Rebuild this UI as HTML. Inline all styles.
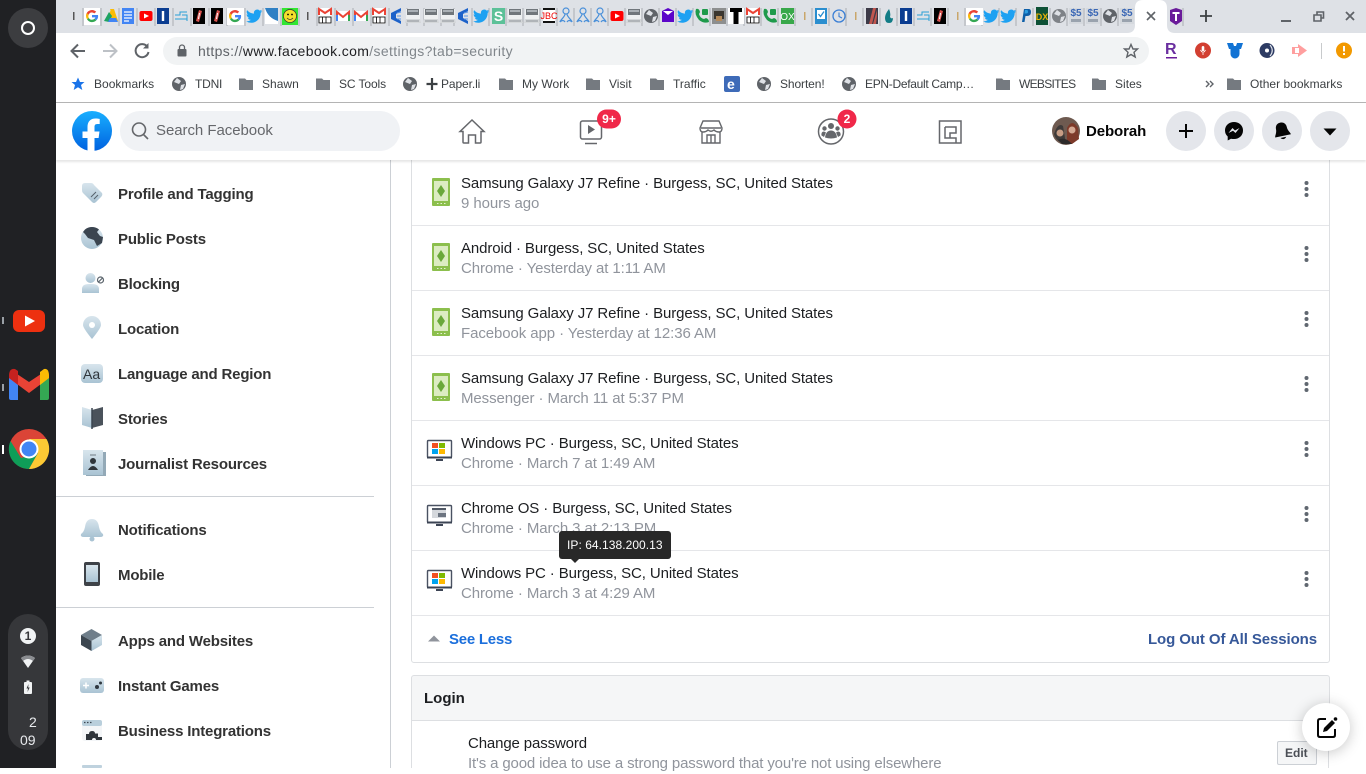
<!DOCTYPE html>
<html><head><meta charset="utf-8"><title>Security and Login</title>
<style>
html,body{margin:0;padding:0;width:1366px;height:768px;overflow:hidden;background:#fff;font-family:"Liberation Sans",sans-serif}
.b,.t{position:absolute}
.t{white-space:nowrap;line-height:20px}
.bm{font-size:12px;color:#3c4043;top:74px;letter-spacing:.02px}
.s{font-size:15px;font-weight:bold;color:#333;left:118px;letter-spacing:-.18px}
.r1{font-size:15px;color:#1c1e21;left:461px;letter-spacing:-.11px}
.r2{font-size:15px;color:#90949c;left:461px;letter-spacing:-.09px}
svg{position:absolute;left:0;top:0}
</style></head><body>
<div class="b" style="left:0;top:0;width:56px;height:768px;background:#202124"></div>
<div class="b" style="left:56px;top:0;width:1310px;height:33px;background:#dee1e6"></div>
<div class="b" style="left:163px;top:37px;width:986px;height:28px;border-radius:14px;background:#f1f3f4"></div>
<div class="b" style="left:56px;top:102px;width:1310px;height:1px;background:#b4b4b4"></div>
<div class="b" style="left:390px;top:160px;width:1px;height:608px;background:#ccd0d5"></div>
<div class="b" style="left:56px;top:496px;width:318px;height:1px;background:#ccd0d5"></div>
<div class="b" style="left:56px;top:607px;width:318px;height:1px;background:#ccd0d5"></div>
<div class="b" style="left:411px;top:150px;width:917px;height:511px;border:1px solid #dddfe2;border-radius:0 0 3px 3px;box-sizing:content-box"></div>
<div class="b" style="left:412px;top:225px;width:917px;height:1px;background:#e5e6e9"></div>
<div class="b" style="left:412px;top:290px;width:917px;height:1px;background:#e5e6e9"></div>
<div class="b" style="left:412px;top:355px;width:917px;height:1px;background:#e5e6e9"></div>
<div class="b" style="left:412px;top:420px;width:917px;height:1px;background:#e5e6e9"></div>
<div class="b" style="left:412px;top:485px;width:917px;height:1px;background:#e5e6e9"></div>
<div class="b" style="left:412px;top:550px;width:917px;height:1px;background:#e5e6e9"></div>
<div class="b" style="left:412px;top:615px;width:917px;height:1px;background:#e5e6e9"></div>
<div class="b" style="left:411px;top:675px;width:917px;height:44px;background:#f5f6f7;border:1px solid #dddfe2;border-radius:3px 3px 0 0"></div>
<div class="b" style="left:411px;top:720px;width:1px;height:48px;background:#dddfe2"></div>
<div class="b" style="left:1328px;top:720px;width:1px;height:48px;background:#dddfe2"></div>
<div class="b" style="left:56px;top:103px;width:1310px;height:57px;background:#fff;box-shadow:0 2px 2px rgba(0,0,0,.1)"></div>
<div class="b" style="left:120px;top:111px;width:280px;height:40px;border-radius:20px;background:#f0f2f5"></div>
<div class="b" style="left:1277px;top:741px;width:38px;height:22px;background:#f5f6f7;border:1px solid #ccd0d5;border-radius:2px"></div>

<svg width="1366" height="768" viewBox="0 0 1366 768" xmlns="http://www.w3.org/2000/svg">
<defs>
<linearGradient id="sb" x1="0" y1="0" x2="0" y2="1"><stop offset="0" stop-color="#d8e5ed"/><stop offset="1" stop-color="#a9c3d3"/></linearGradient>
<linearGradient id="fb" x1="0" y1="0" x2="0" y2="1"><stop offset="0" stop-color="#19afff"/><stop offset="1" stop-color="#0062e0"/></linearGradient>
<g id="G"><path d="M-6 0A6 6 0 0 1 4.2 -4.2L2.4 -2.6A3.6 3.6 0 0 0 -3.4 -1.2Z" fill="#ea4335"/><path d="M-6 0A6 6 0 0 0 -5 3.3L-3.2 2A3.6 3.6 0 0 1 -3.4 -1.2L-5.2 -3Z" fill="#fbbc05"/><path d="M-5 3.3A6 6 0 0 0 4.4 4.3L2.6 2.6A3.6 3.6 0 0 1 -3.2 2Z" fill="#34a853"/><path d="M6 -1H0V1.4H3.4A3.6 3.6 0 0 1 2.6 2.6L4.4 4.3A6 6 0 0 0 6 -1Z" fill="#4285f4"/></g>
<g id="TW"><path transform="translate(-8,-8) scale(.68)" fill="#1da1f2" d="M23.953 4.57a10 10 0 01-2.825.775 4.958 4.958 0 002.163-2.723c-.951.555-2.005.959-3.127 1.184a4.92 4.92 0 00-8.384 4.482C7.69 8.095 4.067 6.13 1.64 3.162a4.822 4.822 0 00-.666 2.475c0 1.71.87 3.213 2.188 4.096a4.904 4.904 0 01-2.228-.616v.06a4.923 4.923 0 003.946 4.827 4.996 4.996 0 01-2.212.085 4.936 4.936 0 004.604 3.417 9.867 9.867 0 01-6.102 2.105c-.39 0-.779-.023-1.17-.067a13.995 13.995 0 007.557 2.209c9.053 0 13.998-7.496 13.998-13.985 0-.21 0-.42-.015-.63A9.935 9.935 0 0024 4.59z"/></g>
<g id="YT"><rect x="-6.5" y="-5" width="13" height="10" rx="2" fill="#f00"/><path d="M-2 -2.5L3 0L-2 2.5Z" fill="#fff"/></g>
<g id="I"><rect x="-6" y="-8" width="12" height="16" fill="#0b3d91"/><rect x="-1.2" y="-5" width="2.4" height="10" fill="#fff"/></g>
<g id="AR"><path d="M-6 -1H-1V-4H6M-6 3H6M1 -1H6V5" fill="none" stroke="#2a9fd6" stroke-width="1"/></g>
<g id="BL"><rect x="-6" y="-8" width="12" height="16" fill="#000"/><path d="M0 -6L3 -5L0 6L-3 5Z" fill="#d9534f"/><path d="M0 -3L1 -3L0 3L-1 3Z" fill="#fff"/></g>
<g id="M"><rect x="-6.5" y="-5" width="13" height="10" fill="#fff"/><path d="M-6 5V-4L0 1L6 -4V5" fill="none" stroke="#ea4335" stroke-width="2"/><path d="M-6 5V-1" stroke="#4285f4" stroke-width="2"/><path d="M6 5V-1" stroke="#34a853" stroke-width="2"/></g>
<g id="M0"><rect x="-6.5" y="-8" width="13" height="16" fill="#fff"/><path d="M-6 -1V-7L0 -3L6 -7V-1" fill="none" stroke="#ea4335" stroke-width="2"/><rect x="-6" y="1" width="12" height="6" fill="none" stroke="#000" stroke-width=".8"/><path d="M-2.5 1V7M1 1V7" stroke="#000" stroke-width=".8"/></g>
<g id="WN"><path d="M-5 -3L5 -8V-5L0 -2V2L5 5V8L-5 3Z" fill="#1d62c9"/><path d="M1 -3L5 -4M1 0H5M1 3L5 3" stroke="#5c96e6" stroke-width="1"/></g>
<g id="PC"><rect x="-7" y="-7" width="14" height="10" fill="#eef0f1"/><rect x="-6" y="-7" width="12" height="6" fill="#70767b"/><rect x="-5" y="-6" width="10" height="2" fill="#aab0b5"/><path d="M-7 3H7L8 7H-8Z" fill="#d4d7d9"/><rect x="-6" y="4.500" width="12" height="1" fill="#8d9296"/></g>
<g id="US"><circle cy="-5" r="3" fill="none" stroke="#4a90d9" stroke-width="1.200"/><path d="M-1 -2C-1 1 -6 4 -6 6M1 -2C1 1 6 4 6 6M-6 6Q-3 3 -1 6M6 6Q3 3 1 6" fill="none" stroke="#4a90d9" stroke-width="1.200"/></g>
<g id="GL"><circle r="7" fill="#5f6368"/><path d="M-2 -6L2 -3L0 0L-5 -2ZM2 1L6 0L4 5L1 6Z" fill="#dee1e6"/></g>
<g id="PH"><path d="M-6 -7Q-3 -8 -2 -4L-3 -2Q-2 2 2 3L4 2Q7 3 7 6Q2 8 -3 4Q-8 -2 -6 -7Z" fill="#1e9a4b"/><rect x="0" y="-7" width="6" height="6" rx="1" fill="#1e9a4b"/></g>
<g id="SSB"><rect x="-7" y="-8" width="14" height="16" fill="#d5d9de"/><rect x="-5" y="3" width="10" height="3" fill="#9aa3ae"/></g>
</defs>

<!-- launcher + shelf -->
<circle cx="28" cy="28" r="20" fill="#3c3d40"/><circle cx="28" cy="28" r="6" fill="none" stroke="#fff" stroke-width="2"/>
<rect x="13" y="310" width="32" height="22" rx="6" fill="#ed3010"/><path d="M25 315.500L35 321L25 326.500Z" fill="#fff"/>
<rect x="2" y="317" width="2" height="7" fill="#9aa0a6"/>
<path d="M9 376V398Q9 400 11 400H18V381Z" fill="#4285f4"/><path d="M40 381V400H47Q49 400 49 398V376Z" fill="#34a853"/><path d="M11 370L29 382L47 370L49 378L29 393L9 378Z" fill="#ea4335"/><path d="M9 376Q9 368 15 369L18 371V385L9 378Z" fill="#c5221f"/><path d="M40 385V372L44 369Q49 368 49 376V378Z" fill="#fbbc04"/>
<rect x="2" y="384" width="2" height="7" fill="#9aa0a6"/>
<circle cx="29" cy="449" r="20" fill="#db4437"/><path d="M10.500 441A20 20 0 0 0 29 469L38 453L21 458Z" fill="#0f9d58"/><path d="M29 469A20 20 0 0 0 46.500 439L29 439L38 453Z" fill="#fcc934"/><circle cx="29" cy="449" r="9.500" fill="#fff"/><circle cx="29" cy="449" r="7.500" fill="#4285f4"/>
<rect x="2" y="445" width="2" height="9" fill="#fff"/>
<rect x="8" y="614" width="40" height="136" rx="20" fill="#36373a"/>
<circle cx="28" cy="636" r="8" fill="#f1f3f4"/>
<path d="M21 658Q28 653 35 658L28 668Z" fill="#f1f3f4"/><path d="M21 658Q28 653 35 658L33 661Q28 657 23 661Z" fill="#8a8c90"/>
<rect x="24" y="682" width="8" height="12" rx="1" fill="#f1f3f4"/><rect x="26.500" y="680.500" width="3" height="2" fill="#f1f3f4"/><path d="M28.500 684L26.500 688.500H28L27.500 692L29.700 687.500H28.200Z" fill="#36373a"/>

<!-- tab strip -->
<g stroke="#a9adb3" stroke-width="1">
<path d="M83 8V26M101 8V26M119 8V26M137 8V26M155 8V26M173 8V26M191 8V26M209 8V26M227 8V26M245 8V26M263 8V26M281 8V26M299 8V26M317 8V26M335 8V26M353 8V26M371 8V26M389 8V26M407 8V26M424 8V26M441 8V26M454 8V26M472 8V26M489 8V26M506 8V26M523 8V26M540 8V26M557 8V26M574 8V26M591 8V26M608 8V26M625 8V26M642 8V26M659 8V26M676 8V26M693 8V26M710 8V26M727 8V26M744 8V26M761 8V26M778 8V26M795 8V26M812 8V26M829 8V26M846 8V26M863 8V26M880 8V26M897 8V26M914 8V26M931 8V26M948 8V26M965 8V26M982 8V26M999 8V26M1016 8V26M1033 8V26M1050 8V26M1067 8V26M1084 8V26M1101 8V26M1118 8V26"/>
</g>
<rect x="73" y="12" width="1.500" height="8" fill="#555"/>
<rect x="84" y="8" width="16" height="17" fill="#fff"/><use href="#G" x="92" y="16"/>
<path d="M107 21L111 9H114L118 21Z" fill="#fbbc04"/><path d="M104 21L109 12L112 16L109 22Z" fill="#1ea362"/><path d="M108 22H118L116 18H110Z" fill="#4285f4"/><path d="M110 9H114L112 14Z" fill="#fbbc04"/>
<rect x="122" y="8" width="12" height="16" fill="#4285f4"/><path d="M124 12H132M124 15H132M124 18H132M124 21H129" stroke="#fff" stroke-width="1.300"/>
<use href="#YT" x="146" y="16"/><use href="#I" x="163" y="16"/><use href="#AR" x="181" y="16"/><use href="#BL" x="199" y="16"/><use href="#BL" x="217" y="16"/>
<rect x="227" y="8" width="17" height="17" fill="#fff"/><use href="#G" x="235" y="16"/><use href="#TW" x="254" y="16"/>
<rect x="265" y="8" width="13" height="16" fill="#2f80c4"/><path d="M265 8Q268 18 278 21V24H265Z" fill="#fff"/>
<rect x="282" y="8" width="16" height="17" fill="#32e632"/><circle cx="290" cy="16" r="6.500" fill="#f2df2c" stroke="#333" stroke-width=".7"/><circle cx="288" cy="14.500" r=".9"/><circle cx="292" cy="14.500" r=".9"/><path d="M287 18Q290 21 293 18" fill="none" stroke="#333" stroke-width=".8"/>
<rect x="307" y="12" width="1.500" height="8" fill="#555"/>
<use href="#M0" x="325" y="16"/><use href="#M" x="343" y="16"/><use href="#M" x="361" y="16"/><use href="#M0" x="379" y="16"/>
<use href="#WN" x="396" y="16"/><use href="#PC" x="413" y="16"/><use href="#PC" x="431" y="16"/><use href="#PC" x="448" y="16"/><use href="#WN" x="463" y="16"/><use href="#TW" x="481" y="16"/>
<rect x="492" y="8" width="13" height="16" fill="#5cc198"/><text x="498.500" y="21" font-family="Liberation Sans" font-size="14" font-weight="bold" fill="#fff" text-anchor="middle">S</text>
<use href="#PC" x="515" y="16"/><use href="#PC" x="532" y="16"/>
<rect x="543" y="8" width="12" height="15" fill="#111"/><rect x="543" y="10" width="12" height="11" fill="#fff"/><text x="549" y="19" font-family="Liberation Sans" font-size="9" fill="#e00" text-anchor="middle">JBC</text>
<use href="#US" x="566" y="16"/><use href="#US" x="583" y="16"/><use href="#US" x="600" y="16"/><use href="#YT" x="617" y="16"/><use href="#PC" x="634" y="16"/><use href="#GL" x="651" y="16"/>
<path d="M662 11L668 8L674 11V22H662Z" fill="#5b06c9"/><path d="M663 11L668 15L673 11Z" fill="#fff"/>
<use href="#TW" x="685" y="16"/><use href="#PH" x="702" y="16"/>
<rect x="712" y="8" width="14" height="16" fill="#8d8f8f"/><rect x="714" y="11" width="10" height="8" fill="#3b3730"/><rect x="716" y="16" width="6" height="5" fill="#b58a5a"/>
<rect x="728" y="8" width="16" height="16" fill="#fff"/><path d="M730 8H742V12H738.500V24H733.500V12H730Z" fill="#000"/>
<use href="#M0" x="753" y="16"/><use href="#PH" x="770" y="16"/>
<rect x="781" y="8" width="13" height="16" fill="#38a84a"/><text x="787.500" y="20" font-family="Liberation Sans" font-size="10" fill="#fff" text-anchor="middle">OX</text>
<rect x="804" y="12" width="1.500" height="8" fill="#c9a66b"/>
<rect x="815" y="8" width="12" height="16" fill="#2a8ecf"/><rect x="817" y="10" width="8" height="9" fill="#fff"/><path d="M818.500 14L820.500 16.500L824 11.500" fill="none" stroke="#2a8ecf" stroke-width="1.300"/>
<circle cx="839" cy="16" r="6" fill="none" stroke="#3a7fd5" stroke-width="1.300"/><path d="M839 12.500V16.500L842 18" fill="none" stroke="#3a7fd5" stroke-width="1.100"/>
<rect x="855" y="12" width="1.500" height="8" fill="#c9a66b"/>
<rect x="866" y="8" width="12" height="16" fill="#3c3a48"/><path d="M869 24L873 8H876L872 24ZM873 24L877 10V16L876 24Z" fill="#c0564f"/>
<path d="M889 9Q885 14 885 18Q885 23 889 23Q893 23 893 18Q891 19 890 17Q891 13 889 9Z" fill="#127c86"/>
<use href="#I" x="906" y="16"/><use href="#AR" x="923" y="16"/><use href="#BL" x="940" y="16"/>
<rect x="957" y="12" width="1.500" height="8" fill="#c9a66b"/>
<rect x="966" y="8" width="17" height="17" fill="#fff"/><use href="#G" x="974" y="16"/><use href="#TW" x="991" y="16"/><use href="#TW" x="1008" y="16"/>
<path d="M1022 22L1024 9H1029Q1031 9 1031 12Q1031 16 1027 16H1025.500L1024.500 22Z" fill="#0d5fa8"/><path d="M1025 10H1027Q1028 10 1028 12Q1028 13.500 1026 13.500H1024.500Z" fill="#2c9ee0"/>
<rect x="1036" y="7" width="12" height="18" fill="#0d5136"/><text x="1042" y="20" font-family="Liberation Sans" font-size="9" font-weight="bold" fill="#e8b10a" text-anchor="middle">DX</text>
<use href="#GL" x="1059" y="16" opacity=".75"/>
<use href="#SSB" x="1076" y="16"/><text x="1076" y="16" font-family="Liberation Sans" font-size="10" font-weight="bold" fill="#3a67b5" text-anchor="middle">$5</text>
<use href="#SSB" x="1093" y="16"/><text x="1093" y="16" font-family="Liberation Sans" font-size="10" font-weight="bold" fill="#3a67b5" text-anchor="middle">$5</text>
<use href="#GL" x="1110" y="16"/>
<use href="#SSB" x="1127" y="16"/><text x="1127" y="16" font-family="Liberation Sans" font-size="10" font-weight="bold" fill="#3a67b5" text-anchor="middle">$5</text>

<!-- active tab -->
<path d="M1127 33Q1135 33 1135 25V8Q1135 0 1143 0H1159Q1167 0 1167 8V25Q1167 33 1175 33Z" fill="#fff"/>
<path d="M1147 12L1155 20M1155 12L1147 20" stroke="#5f6368" stroke-width="1.600"/>
<path d="M1170 10L1176 8L1182 10V21L1176 25L1170 21Z" fill="#6a1b9a"/><path d="M1172.500 12H1179.500V14H1177V21H1175V14H1172.500Z" fill="#fff"/>
<path d="M1183 8V26" stroke="#a9adb3"/>
<path d="M1206 10V22M1200 16H1212" stroke="#3c4043" stroke-width="1.800"/>
<rect x="1281" y="20" width="10" height="2" fill="#5f6368"/>
<path d="M1314 15H1321V21H1314ZM1317 15V12H1323.500V18H1321" fill="none" stroke="#5f6368" stroke-width="1.600"/>
<path d="M1346 12L1354 20M1354 12L1346 20" stroke="#5f6368" stroke-width="1.800"/>

<!-- toolbar -->
<path d="M85 51H72M78 44.500L71.500 51L78 57.500" fill="none" stroke="#5f6368" stroke-width="2"/>
<path d="M103 51H116M110 44.500L116.500 51L110 57.500" fill="none" stroke="#bdc1c6" stroke-width="2"/>
<path d="M147.500 47A6.500 6.500 0 1 0 148.500 52" fill="none" stroke="#5f6368" stroke-width="2"/><path d="M148.500 43V48.500H143Z" fill="#5f6368"/>
<rect x="177.500" y="49" width="9" height="7.500" rx="1" fill="#5f6368"/><path d="M179.500 49V47.500A2.500 2.500 0 0 1 184.500 47.500V49" fill="none" stroke="#5f6368" stroke-width="1.300"/>
<path d="M1131 44.500L1133 49H1137.500L1134 52.300L1135.200 57L1131 54.500L1126.800 57L1128 52.300L1124.500 49H1129Z" fill="none" stroke="#5f6368" stroke-width="1.400"/>
<rect x="1166" y="57" width="11" height="1.500" fill="#6a1b9a"/>
<circle cx="1203" cy="50.500" r="8" fill="#d23f31"/><rect x="1201.700" y="46" width="2.600" height="5" rx="1.300" fill="#fff"/><path d="M1200.500 50Q1203 54.500 1205.500 50M1203 53V55" fill="none" stroke="#fff" stroke-width=".8"/>
<path d="M1227 43H1233L1234 46H1236L1237 43H1243L1241 49H1239.500V54A4.500 4.500 0 0 1 1230.500 54V49H1229Z" fill="#1273d4"/>
<circle cx="1267" cy="50.500" r="7.500" fill="#2d3b63"/><circle cx="1267" cy="50.500" r="2" fill="#fff"/><path d="M1270 45Q1274.500 50.500 1270 56" fill="none" stroke="#dfe3ea" stroke-width="1.200"/>
<path d="M1292 47H1298V44L1307 50.500L1298 57V54H1292Z" fill="#ff9f9f"/><rect x="1295" y="48" width="4" height="5" fill="#fff"/>
<rect x="1321" y="43" width="1" height="16" fill="#c8cacc"/>
<circle cx="1344" cy="50.500" r="8" fill="#f29900"/><rect x="1343" y="46" width="2" height="5.500" fill="#fff"/><rect x="1343" y="53" width="2" height="2" fill="#fff"/>

<!-- bookmarks -->
<path d="M78 77.500L80 82H84.500L81 85L82.300 90L78 87.300L73.700 90L75 85L71.500 82H76Z" fill="#1a73e8"/>
<use href="#GL" x="179" y="84"/><use href="#GL" x="410" y="84"/><use href="#GL" x="764" y="84"/><use href="#GL" x="849" y="84"/>
<g fill="#757a80">
<path d="M239 78.500H245L246.500 80H253V90H239Z"/>
<path d="M316 78.500H322L323.500 80H330V90H316Z"/><path d="M499 78.500H505L506.500 80H513V90H499Z"/><path d="M586 78.500H592L593.500 80H600V90H586Z"/><path d="M650 78.500H656L657.500 80H664V90H650Z"/><path d="M996 78.500H1002L1003.500 80H1010V90H996Z"/><path d="M1092 78.500H1098L1099.500 80H1106V90H1092Z"/><path d="M1227 78.500H1233L1234.500 80H1241V90H1227Z"/>
</g>
<path d="M432 78V90M426.500 84H437.500" stroke="#3c4043" stroke-width="2.200"/>
<rect x="724" y="76" width="16" height="16" rx="2" fill="#3e6bb8"/>
<path d="M1206 81L1209 84L1206 87M1210 81L1213 84L1210 87" fill="none" stroke="#5f6368" stroke-width="1.400"/>

<!-- fb header -->
<circle cx="92" cy="131" r="20" fill="url(#fb)"/>
<path d="M87.500 151V138H82.500V131.500H87.500V127C87.500 121.500 90.500 118.500 95.500 118.500C97.500 118.500 99.700 118.900 99.700 118.900V124H97.300C95 124 94.500 125.400 94.500 127V131.500H99.500L98.600 138H94.500V151Z" fill="#fff"/>
<circle cx="139" cy="129.500" r="6.500" fill="none" stroke="#65676b" stroke-width="1.600"/><path d="M143.500 134.500L148 139" stroke="#65676b" stroke-width="1.600"/>
<g fill="none" stroke="#65676b" stroke-width="1.500">
<path d="M460 131.500L472 120L484 131.500H481V142Q481 143 480 143H475.500V135H468.500V143H464Q463 143 463 142V131.500Z"/>
<rect x="580.500" y="121" width="21" height="18" rx="2"/><path d="M585 143.500H597"/>
<path d="M703 121H719L722 128Q722 132 719 132Q716 132 714 130Q711 132.500 708 130Q706 132 703 132Q700 132 700 128ZM701 128H721M702 132V143H720V132M707 143V135H715V143M711 135V143" stroke-width="1.400"/>
<circle cx="831" cy="131.500" r="12.500"/>
<rect x="939.500" y="121" width="21.500" height="22"/><path d="M945 127H956V133H950V138H956V143M945 127V138H950" stroke-width="1.500"/>
</g>
<path d="M588 125L588 134L595 129.500Z" fill="#65676b"/>
<circle cx="831" cy="126" r="3" fill="#65676b"/><circle cx="824.500" cy="128.500" r="2.200" fill="#65676b"/><circle cx="837.500" cy="128.500" r="2.200" fill="#65676b"/><path d="M825 137.500Q826 130.500 831 130.500Q836 130.500 837 137.500Q831 139.500 825 137.500Z" fill="#65676b"/><path d="M821.500 135.500Q821 131.500 824 131.500L826 132.500L824 137ZM840.500 135.500Q841 131.500 838 131.500L836 132.500L838 137Z" fill="#65676b"/>
<rect x="597" y="109.500" width="24" height="19" rx="9.500" fill="#f02849"/>
<circle cx="847" cy="119" r="9.500" fill="#f02849"/>
<circle cx="1066" cy="131" r="14" fill="#6e5a50"/><path d="M1054 134Q1058 122 1063 126L1066 144Q1056 142 1054 134Z" fill="#3e3a39"/><circle cx="1060" cy="133" r="3.500" fill="#c79d85"/><path d="M1067 128Q1072 118 1078 128L1079 139L1072 144H1067Z" fill="#7d3a2a"/><circle cx="1072" cy="130" r="3.500" fill="#d3a893"/><path d="M1058 140Q1065 136 1072 144H1062Z" fill="#2c2a2a"/>
<circle cx="1186" cy="131" r="20" fill="#e4e6eb"/><circle cx="1234" cy="131" r="20" fill="#e4e6eb"/><circle cx="1282" cy="131" r="20" fill="#e4e6eb"/><circle cx="1330" cy="131" r="20" fill="#e4e6eb"/>
<path d="M1186 124V138M1179 131H1193" stroke="#050505" stroke-width="2"/>
<path d="M1234 122C1228.500 122 1225 125.800 1225 130.500C1225 133 1226 135 1227.700 136.500V140.500L1231 138.700Q1232.500 139 1234 139C1239.500 139 1243 135.200 1243 130.500C1243 125.800 1239.500 122 1234 122Z" fill="#050505"/><path d="M1228.500 133L1232.500 128L1235 130.500L1239.500 128L1235.500 133L1233 130.700Z" fill="#e4e6eb"/>
<g transform="rotate(-12 1282 131)"><path d="M1282 122.500C1278 122.500 1276.500 125.500 1276.500 128C1276.500 132 1274 134 1274 136H1290C1290 134 1287.500 132 1287.500 128C1287.500 125.500 1286 122.500 1282 122.500Z" fill="#050505"/><path d="M1279 137.500Q1282 141 1285 137.500Z" fill="#050505"/></g>
<path d="M1323.500 128.500H1336.500L1330 135.500Z" fill="#050505"/>

<!-- sidebar icons -->
<path d="M82 186Q82 183 85 183H91Q93 183 94 185L102 193Q103 195 101 197L96 202Q94 204 92 202L83 193Q82 192 82 190Z" fill="url(#sb)"/><path d="M91 197L96 192M94 199L98 195" stroke="#56626c" stroke-width="1"/>
<circle cx="92" cy="238" r="11" fill="url(#sb)"/><path d="M85 229.500A11 11 0 0 1 99 229.500L97 232L100 236L103 237L102 243L97 246L94 240L88 238L85 234L83 232Z" fill="#3b4550"/>
<circle cx="90.500" cy="278" r="5" fill="url(#sb)"/><path d="M82 293V289Q82 284 89 284H92Q99 284 99 289V293Z" fill="url(#sb)"/><circle cx="100.500" cy="280" r="3" fill="none" stroke="#5a636b" stroke-width="1.200"/><path d="M98.500 282L102.500 278" stroke="#5a636b" stroke-width="1.200"/>
<path d="M92 339Q83 328 83 325A9 9 0 0 1 101 325Q101 328 92 339Z" fill="url(#sb)"/><circle cx="92" cy="325" r="3" fill="#fff"/>
<rect x="81" y="364" width="22" height="19" rx="4" fill="url(#sb)"/>
<path d="M92 410L82 407V425L92 428Z" fill="url(#sb)"/><path d="M92 410L103 407V425L92 428Z" fill="#4a525b"/><path d="M92 408V429" stroke="#3b4550" stroke-width="1.500"/>
<rect x="86" y="452" width="20" height="24" fill="#93a9b7"/><rect x="83" y="450" width="20" height="25" fill="url(#sb)"/><circle cx="93" cy="461" r="3" fill="#2f353b"/><path d="M88 470Q93 462 98 470Z" fill="#2f353b"/><path d="M90 455H96" stroke="#707a84"/>
<path d="M92 519Q86 519 85 527Q84 532 81 534Q80 537 84 537H100Q104 537 103 534Q100 532 99 527Q98 519 92 519Z" fill="url(#sb)"/><circle cx="92" cy="539" r="2.500" fill="#a9c3d3"/>
<rect x="84" y="562" width="16" height="24" rx="2" fill="#3e4248"/><rect x="86" y="565" width="12" height="17" fill="url(#sb)"/>
<path d="M81 635L91.500 629L102 635L91.500 641Z" fill="#6f7e8a"/><path d="M81 635L91.500 641V651L81 645Z" fill="#3c4650"/><path d="M102 635L91.500 641V651L102 645Z" fill="url(#sb)"/>
<rect x="80" y="678" width="24" height="15" rx="3" fill="url(#sb)"/><path d="M83 685.500H89M86 682.500V688.500" stroke="#fff" stroke-width="1.500"/><circle cx="97" cy="687" r="2" fill="#303840"/><circle cx="100.500" cy="683" r="1.500" fill="#303840"/>
<rect x="82" y="720" width="20" height="21" rx="3" fill="#f4f6f8"/><rect x="82" y="720" width="20" height="6" rx="2" fill="#b9cfdc"/><path d="M84 722.500h1.500M87 722.500h1.500M90 722.500h1.500" stroke="#3b4550" stroke-width="1.200"/><path d="M86 740V734H89Q89 731 92 731Q95 731 95 733.500H98V737H102V740H96Q96 738 94 738Q92 738 92 740Z" fill="#2f353b"/>
<rect x="82" y="765" width="20" height="3" rx="1" fill="#bfd2de"/>

<!-- device icons -->
<g id="p1"><rect x="432" y="178" width="18" height="28" rx="1" fill="#8cbf4d"/><rect x="434" y="181" width="14" height="20" fill="#dcecc2"/><path d="M441 185L445 191L441 197L437 191Z" fill="#6aa83a"/><path d="M437 203.500h1.500M440.500 203.500h1.500M444 203.500h1.500" stroke="#e6f2d5"/></g>
<use href="#p1" y="65"/><use href="#p1" y="130"/><use href="#p1" y="195"/>
<g id="mon"><rect x="427.500" y="440.500" width="24" height="17" rx="1" fill="#fff" stroke="#4a5262" stroke-width="1.400"/><path d="M427 457.500H452" stroke="#3c4454" stroke-width="2"/><rect x="436" y="459" width="7" height="2" fill="#3c4454"/></g>
<rect x="432" y="443" width="6" height="5" fill="#f25022"/><rect x="439" y="443" width="6" height="5" fill="#7fba00"/><rect x="432" y="449" width="6" height="5" fill="#00a4ef"/><rect x="439" y="449" width="6" height="5" fill="#ffb900"/>
<use href="#mon" y="65"/><rect x="432" y="508" width="14" height="10" fill="#d5d8dc"/><rect x="432" y="508" width="14" height="2" fill="#505865"/><rect x="438" y="513" width="8" height="4" fill="#6c7480"/>
<use href="#mon" y="130"/>
<rect x="432" y="573" width="6" height="5" fill="#f25022"/><rect x="439" y="573" width="6" height="5" fill="#7fba00"/><rect x="432" y="579" width="6" height="5" fill="#00a4ef"/><rect x="439" y="579" width="6" height="5" fill="#ffb900"/>
<g fill="#606770">
<circle cx="1306.500" cy="183" r="2"/><circle cx="1306.500" cy="189" r="2"/><circle cx="1306.500" cy="195" r="2"/>
<circle cx="1306.500" cy="248" r="2"/><circle cx="1306.500" cy="254" r="2"/><circle cx="1306.500" cy="260" r="2"/>
<circle cx="1306.500" cy="313" r="2"/><circle cx="1306.500" cy="319" r="2"/><circle cx="1306.500" cy="325" r="2"/>
<circle cx="1306.500" cy="378" r="2"/><circle cx="1306.500" cy="384" r="2"/><circle cx="1306.500" cy="390" r="2"/>
<circle cx="1306.500" cy="443" r="2"/><circle cx="1306.500" cy="449" r="2"/><circle cx="1306.500" cy="455" r="2"/>
<circle cx="1306.500" cy="508" r="2"/><circle cx="1306.500" cy="514" r="2"/><circle cx="1306.500" cy="520" r="2"/>
<circle cx="1306.500" cy="573" r="2"/><circle cx="1306.500" cy="579" r="2"/><circle cx="1306.500" cy="585" r="2"/>
</g>
<path d="M428 641.500L434 635.500L440 641.500Z" fill="#90949c"/>
</svg>

<!-- browser text -->
<div class="t" style="left:198px;top:41px;font-size:14px;color:#5f6368;letter-spacing:.36px">https://<span style="color:#202124">www.facebook.com</span><span style="color:#80868b">/settings?tab=security</span></div>
<div class="t" style="left:1165px;top:40px;font-size:16px;font-weight:bold;color:#6a2fa0">R</div>
<div class="t bm" style="left:94px">Bookmarks</div>
<div class="t bm" style="left:195px;letter-spacing:-.2px">TDNI</div>
<div class="t bm" style="left:262px">Shawn</div>
<div class="t bm" style="left:339px;letter-spacing:-.1px">SC Tools</div>
<div class="t bm" style="left:441px;letter-spacing:-.1px">Paper.li</div>
<div class="t bm" style="left:522px">My Work</div>
<div class="t bm" style="left:609px">Visit</div>
<div class="t bm" style="left:673px">Traffic</div>
<div class="t" style="left:727px;top:74px;font-size:14px;font-weight:bold;color:#fff">e</div>
<div class="t bm" style="left:780px;letter-spacing:-.1px">Shorten!</div>
<div class="t bm" style="left:865px;letter-spacing:-.3px">EPN-Default Camp…</div>
<div class="t bm" style="left:1019px;letter-spacing:-.7px">WEBSITES</div>
<div class="t bm" style="left:1115px">Sites</div>
<div class="t bm" style="left:1250px">Other bookmarks</div>

<!-- shelf text -->
<div class="t" style="left:24px;top:626px;font-size:12px;font-weight:bold;color:#36373a;width:8px;text-align:center">1</div>
<div class="t" style="left:29px;top:712px;font-size:14px;color:#e8eaed">2</div>
<div class="t" style="left:20px;top:730px;font-size:14px;color:#e8eaed">09</div>

<!-- fb header text -->
<div class="t" style="left:156px;top:121px;font-size:15px;color:#65676b;letter-spacing:-.05px">Search Facebook</div>
<div class="t" style="left:601px;top:109px;font-size:12px;font-weight:bold;color:#fff;width:16px;text-align:center">9+</div>
<div class="t" style="left:841px;top:109px;font-size:12px;font-weight:bold;color:#fff;width:12px;text-align:center">2</div>
<div class="t" style="left:1086px;top:122px;font-size:15px;font-weight:bold;color:#050505;letter-spacing:-.1px">Deborah</div>

<!-- sidebar text -->
<div class="t s" style="top:185px">Profile and Tagging</div>
<div class="t s" style="top:230px">Public Posts</div>
<div class="t s" style="top:275px">Blocking</div>
<div class="t s" style="top:320px">Location</div>
<div class="t" style="left:83px;top:364px;font-size:14px;color:#2f353b">Aa</div>
<div class="t s" style="top:365px">Language and Region</div>
<div class="t s" style="top:410px">Stories</div>
<div class="t s" style="top:455px">Journalist Resources</div>
<div class="t s" style="top:521px">Notifications</div>
<div class="t s" style="top:566px">Mobile</div>
<div class="t s" style="top:632px">Apps and Websites</div>
<div class="t s" style="top:677px">Instant Games</div>
<div class="t s" style="top:722px">Business Integrations</div>

<!-- sessions -->
<div class="t r1" style="top:174px">Samsung Galaxy J7 Refine · Burgess, SC, United States</div>
<div class="t r2" style="top:194px">9 hours ago</div>
<div class="t r1" style="top:239px">Android · Burgess, SC, United States</div>
<div class="t r2" style="top:259px">Chrome · Yesterday at 1:11 AM</div>
<div class="t r1" style="top:304px">Samsung Galaxy J7 Refine · Burgess, SC, United States</div>
<div class="t r2" style="top:324px">Facebook app · Yesterday at 12:36 AM</div>
<div class="t r1" style="top:369px">Samsung Galaxy J7 Refine · Burgess, SC, United States</div>
<div class="t r2" style="top:389px">Messenger · March 11 at 5:37 PM</div>
<div class="t r1" style="top:434px">Windows PC · Burgess, SC, United States</div>
<div class="t r2" style="top:454px">Chrome · March 7 at 1:49 AM</div>
<div class="t r1" style="top:499px">Chrome OS · Burgess, SC, United States</div>
<div class="t r2" style="top:519px">Chrome · March 3 at 2:13 PM</div>
<div class="t r1" style="top:564px">Windows PC · Burgess, SC, United States</div>
<div class="t r2" style="top:584px">Chrome · March 3 at 4:29 AM</div>
<div class="t" style="left:449px;top:630px;font-size:15px;font-weight:bold;color:#1b6fdc;letter-spacing:-.25px">See Less</div>
<div class="t" style="right:49px;top:630px;font-size:15px;font-weight:bold;color:#365899;letter-spacing:-.09px">Log Out Of All Sessions</div>
<div class="t" style="left:424px;top:689px;font-size:15px;font-weight:bold;color:#1c1e21">Login</div>
<div class="t" style="left:468px;top:734px;font-size:15px;color:#1c1e21;letter-spacing:-.13px">Change password</div>
<div class="t" style="left:468px;top:754px;font-size:15px;color:#90949c;letter-spacing:-.15px">It's a good idea to use a strong password that you're not using elsewhere</div>
<div class="t" style="left:1285px;top:743px;font-size:12px;font-weight:bold;color:#4b4f56">Edit</div>

<!-- tooltip -->
<div class="b" style="left:559px;top:531px;width:112px;height:28px;background:#282828;border-radius:3px"></div>
<div class="b" style="left:571px;top:559px;width:0;height:0;border-left:4px solid transparent;border-right:4px solid transparent;border-top:4px solid #282828"></div>
<div class="t" style="left:567px;top:535px;font-size:12px;color:#fff;letter-spacing:.05px">IP: 64.138.200.13</div>

<!-- compose FAB -->
<div class="b" style="left:1302px;top:703px;width:48px;height:48px;border-radius:50%;background:#fff;box-shadow:0 2px 14px rgba(0,0,0,.22)"></div>
<svg width="1366" height="768" viewBox="0 0 1366 768" xmlns="http://www.w3.org/2000/svg">
<path d="M1326 719H1320Q1318 719 1318 721V735Q1318 737 1320 737H1333Q1335 737 1335 735V729" fill="none" stroke="#050505" stroke-width="2"/>
<path d="M1323 732L1324 728L1332 720L1335 723L1327 731Z" fill="#050505"/><circle cx="1335.500" cy="719" r="1.800" fill="#050505"/>
</svg>
</body></html>
